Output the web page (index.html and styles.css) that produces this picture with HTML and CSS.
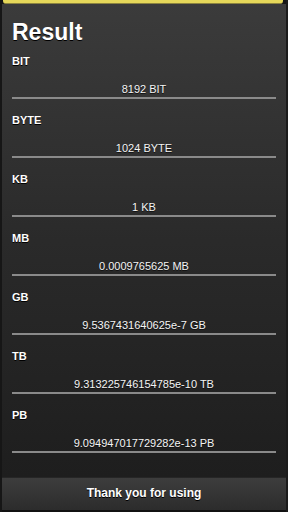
FILE: index.html
```html
<!DOCTYPE html>
<html>
<head>
  <meta charset="UTF-8">
  <link rel="stylesheet" href="styles.css">
</head>
<body>
  <div class="page">
    <div class="header-edge"></div>

    <div class="content">
      <h1 class="title">Result</h1>

      <div class="unit-row">
        <div class="unit-label">BIT</div>
        <div class="unit-value">8192 BIT</div>
      </div>
      <div class="unit-row">
        <div class="unit-label">BYTE</div>
        <div class="unit-value">1024 BYTE</div>
      </div>
      <div class="unit-row">
        <div class="unit-label">KB</div>
        <div class="unit-value">1 KB</div>
      </div>
      <div class="unit-row">
        <div class="unit-label">MB</div>
        <div class="unit-value">0.0009765625 MB</div>
      </div>
      <div class="unit-row">
        <div class="unit-label">GB</div>
        <div class="unit-value">9.5367431640625e-7 GB</div>
      </div>
      <div class="unit-row">
        <div class="unit-label">TB</div>
        <div class="unit-value">9.313225746154785e-10 TB</div>
      </div>
      <div class="unit-row">
        <div class="unit-label">PB</div>
        <div class="unit-value">9.094947017729282e-13 PB</div>
      </div>
    </div>

    <div class="footer">Thank you for using</div>
  </div>
</body>
</html>
```

FILE: styles.css
```css
html, body {
  margin: 0;
  padding: 0;
  background: #151515;
}

body {
  width: 288px;
  height: 512px;
  overflow: hidden;
  font-family: "Liberation Sans", Arial, sans-serif;
  color: #fff;
}

.page {
  height: 512px;
  display: flex;
  flex-direction: column;
  border-left: 2px solid #161616;
  border-right: 2px solid #1b1b1b;
  box-sizing: border-box;
}

/* 顶部标题栏的残边 */
.header-edge {
  height: 3px;
  margin: 0 3px 0 1px;
  background: #e6d85a;
  border-bottom: 1px solid #8c8440;
  border-radius: 0 0 3px 3px;
}

.content {
  flex: 1;
  padding: 15px 10px 0 10px;
  background: linear-gradient(#3b3b3b, #2a2a2a 50%, #1e1e1e);
}

.title {
  margin: 0 0 8px 0;
  font-size: 23px;
  line-height: 27px;
  font-weight: bold;
  text-shadow: 0 1px 0 #000;
}

.unit-row {
  height: 59px;
}

.unit-label {
  font-size: 11px;
  line-height: 14px;
  font-weight: bold;
  text-shadow: 0 1px 0 #000;
}

.unit-value {
  margin-top: 14px;
  padding-bottom: 1px;
  font-size: 11px;
  line-height: 14px;
  text-align: center;
  color: #f4f4f4;
  text-shadow: 0 1px 0 #111;
  border-bottom: 2px solid #8a8a8a;
}

.footer {
  height: 32px;
  line-height: 30px;
  text-align: center;
  font-size: 12px;
  font-weight: bold;
  text-shadow: 0 1px 0 #000;
  background: linear-gradient(#3d3d3d, #2c2c2c);
  border-top: 1px solid #262626;
  border-bottom: 2px solid #111;
}
```
